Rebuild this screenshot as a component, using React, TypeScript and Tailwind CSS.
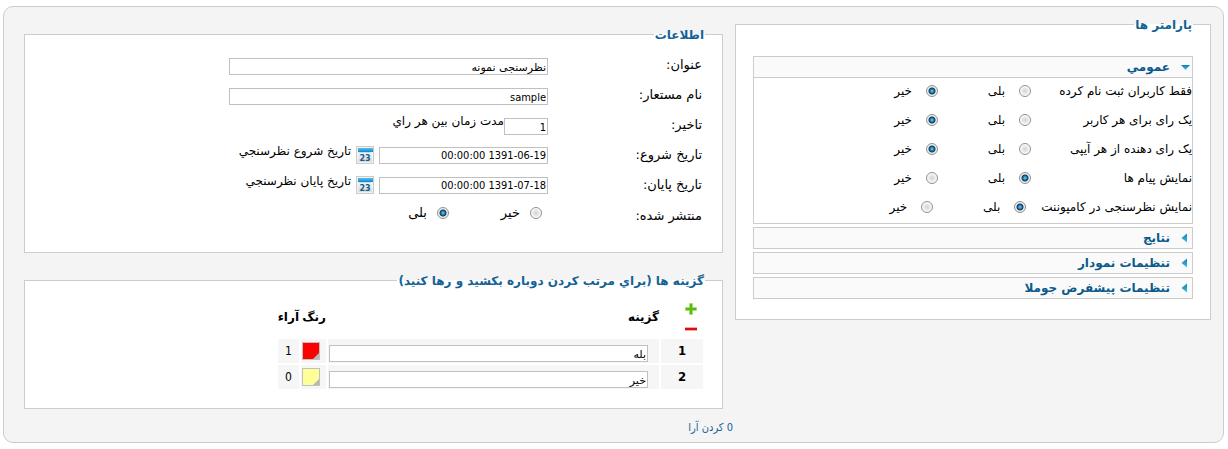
import React, { useState } from 'react';

interface YesNoOption {
    value: string;
    label: string;
}

interface Parameter {
    name: string;
    label: string;
    value: string;
}

interface PollOption {
    id: number;
    title: string;
    swatchClass: string;
    votes: number;
}

const yesNo: YesNoOption[] = [
    { value: '1', label: 'بلی' },
    { value: '0', label: 'خیر' },
];

const noYes: YesNoOption[] = [
    { value: '0', label: 'خیر' },
    { value: '1', label: 'بلی' },
];

const parameters: Parameter[] = [
    { name: 'only_registered', label: 'فقط کاربران ثبت نام کرده', value: '0' },
    { name: 'one_per_user', label: 'یک رای برای هر کاربر', value: '0' },
    { name: 'one_per_ip', label: 'یک رای دهنده از هر آیپی', value: '0' },
    { name: 'show_messages', label: 'نمایش پیام ها', value: '1' },
    { name: 'show_component', label: 'نمایش نظرسنجی در کامپوننت', value: '1' },
];

const pollOptions: PollOption[] = [
    { id: 1, title: 'بله', swatchClass: 'bg-[#ff0000]', votes: 1 },
    { id: 2, title: 'خیر', swatchClass: 'bg-[#ffff99]', votes: 0 },
];

const inputClass = 'h-[17px] border border-[#c0c0c0] bg-white px-px pt-px text-[11px] leading-[14px] text-black outline-none';
const condensed = "font-['DejaVu_Sans_Condensed','DejaVu_Sans',sans-serif]";

const CalendarIcon = () => (
    <svg width="18" height="18" viewBox="0 0 18 18" aria-hidden="true">
        <defs>
            <linearGradient id="cal-page" x1="0" y1="0" x2="0" y2="1">
                <stop offset="0" stopColor="#ffffff" />
                <stop offset="1" stopColor="#dcdcdc" />
            </linearGradient>
            <linearGradient id="cal-band" x1="0" y1="0" x2="0" y2="1">
                <stop offset="0" stopColor="#56c0ee" />
                <stop offset="1" stopColor="#1188cc" />
            </linearGradient>
        </defs>
        <rect x="0.5" y="0.5" width="17" height="17" fill="#f1f1f1" stroke="#cccccc" />
        <rect x="2" y="3" width="14" height="13" fill="url(#cal-page)" />
        <rect x="2" y="2" width="15" height="4" fill="url(#cal-band)" />
        <path d="M3 6.5h12" stroke="#c4dbe8" />
        <text x="9" y="15" textAnchor="middle" fontSize="8" fontWeight="bold" fontFamily="DejaVu Sans" fill="#0b5f92">23</text>
    </svg>
);

const PlusIcon = () => (
    <svg width="14" height="14" viewBox="0 0 14 14" aria-hidden="true">
        <path d="M5.500 1.500h3v4h4v3h-4v4h-3v-4h-4v-3h4z" fill="#5fc21c" stroke="#a5dc78" strokeWidth="1" />
        <path d="M7 2v10M2 7h10" stroke="#58bb12" strokeWidth="2" />
    </svg>
);

const MinusIcon = () => (
    <svg width="14" height="6" viewBox="0 0 14 6" aria-hidden="true">
        <rect x="1" y="1" width="12" height="4" fill="#f3a9a9" />
        <rect x="1" y="2" width="12" height="2" fill="#dd0d0d" />
    </svg>
);

const Arrow = ({ open }: { open: boolean }) => (
    <svg width="10" height="10" viewBox="0 0 10 10" aria-hidden="true">
        <defs>
            <linearGradient id="arrow-fill" x1="0" y1="0" x2="0" y2="1">
                <stop offset="0" stopColor="#0f7fae" />
                <stop offset="1" stopColor="#44bfe8" />
            </linearGradient>
        </defs>
        <path d={open ? 'M1 3h9L5.500 8z' : 'M7 0.500v9L1.500 5z'} fill="url(#arrow-fill)" />
    </svg>
);

interface RadioPairProps {
    name: string;
    options: YesNoOption[];
    defaultValue: string;
    gapClass: string;
}

const RadioPair: React.FC<RadioPairProps> = ({ name, options, defaultValue, gapClass }) => (
    <>
        {options.map(option => (
            <label key={option.value} className={`flex w-[93px] shrink-0 items-center ${gapClass}`}>
                <input
                    type="radio"
                    name={name}
                    value={option.value}
                    defaultChecked={option.value === defaultValue}
                    className="size-3 shrink-0 appearance-none rounded-full border border-[#8e8f8f] bg-[radial-gradient(circle,#d2d5d9_0,#e8e9ea_3px,#ffffff_5px)] checked:bg-[radial-gradient(circle,#6fd0f5_0,#1d74aa_2px,#12385a_3px,#f0f0f0_4px)]"
                />
                <span>{option.label}</span>
            </label>
        ))}
    </>
);

interface FieldRowProps {
    id?: string;
    label: string;
    children: React.ReactNode;
}

const FieldRow: React.FC<FieldRowProps> = ({ id, label, children }) => (
    <div className="flex min-h-[30px] items-center">
        {id ? <label htmlFor={id} className="w-[154px] shrink-0">{label}</label> : <span className="w-[154px] shrink-0 pt-0.5">{label}</span>}
        {children}
    </div>
);

interface PanelProps {
    title: string;
    className: string;
    children: React.ReactNode;
}

const Panel: React.FC<PanelProps> = ({ title, className, children }) => (
    <fieldset className={`min-w-0 border border-[#cccccc] bg-white ${className}`}>
        <legend className="h-4 px-px text-[12px] leading-[19px] font-bold text-[#146295]">{title}</legend>
        {children}
    </fieldset>
);

interface SectionProps {
    title: string;
    open: boolean;
    onToggle: () => void;
    children?: React.ReactNode;
}

const Section: React.FC<SectionProps> = ({ title, open, onToggle, children }) => (
    <div className="border border-[#cccccc]">
        <button
            type="button"
            aria-expanded={open}
            onClick={onToggle}
            className="flex h-5 w-full items-center gap-2.5 bg-[#fafafa] px-[2px] text-[12px] leading-5 font-bold text-[#0b5a8c]"
        >
            <Arrow open={open} />
            {title}
        </button>
        {open && children && <div className="border-t border-[#cccccc]">{children}</div>}
    </div>
);

const DateField = ({ id, value, hint }: { id: string; value: string; hint: string }) => (
    <>
        <input id={id} defaultValue={value} className={`w-[169px] ${condensed} ${inputClass}`} />
        <button type="button" aria-label={hint} className="mx-[5px]"><CalendarIcon /></button>
        <span className="pb-2 text-[12px]">{hint}</span>
    </>
);

const InfoPanel = () => (
    <Panel title="اطلاعات" className="mr-3 pr-[17px] pb-5 pl-4">
        <div className="pt-2 pr-[3px] text-[13px] leading-4">
            <FieldRow id="title" label="عنوان:">
                <input id="title" defaultValue="نظرسنجی نمونه" className={`mt-[3px] w-[319px] ${inputClass}`} />
            </FieldRow>
            <FieldRow id="alias" label="نام مستعار:">
                <input id="alias" defaultValue="sample" className={`mt-[3px] w-[319px] ${condensed} ${inputClass}`} />
            </FieldRow>
            <FieldRow id="lag" label="تاخیر:">
                <input id="lag" defaultValue="1" className={`mt-[3px] w-11 ${condensed} ${inputClass}`} />
                <span className="pb-2 text-[12px]">مدت زمان بین هر راي</span>
            </FieldRow>
            <FieldRow id="start" label="تاریخ شروع:">
                <DateField id="start" value="1391-06-19 00:00:00" hint="تاریخ شروع نظرسنجي" />
            </FieldRow>
            <FieldRow id="end" label="تاریخ پایان:">
                <DateField id="end" value="1391-07-18 00:00:00" hint="تاریخ پایان نظرسنجي" />
            </FieldRow>
            <div className="pb-0.5">
                <FieldRow label="منتشر شده:">
                    <div className="flex pr-1.5 pb-1">
                        <RadioPair name="published" options={noYes} defaultValue="1" gapClass="gap-2.5" />
                    </div>
                </FieldRow>
            </div>
        </div>
    </Panel>
);

const OptionsPanel = () => (
    <Panel title="گزینه ها (براي مرتب کردن دوباره بکشید و رها کنید)" className="mr-3 pr-[17px] pb-[17px] pl-4">
        <table className="mt-1.5 w-[429px] table-fixed border-separate border-spacing-[2px] text-[12px] leading-4">
            <thead>
                <tr className="h-[41px] text-right font-bold">
                    <th className="w-[42px]">
                        <div className="flex flex-col items-center gap-2.5 pl-[18px]">
                            <button type="button" aria-label="افزودن"><PlusIcon /></button>
                            <button type="button" aria-label="حذف"><MinusIcon /></button>
                        </div>
                    </th>
                    <th>گزینه</th>
                    <th className="w-[25px]">رنگ</th>
                    <th className="w-[21px]">آراء</th>
                </tr>
            </thead>
            <tbody>
                {pollOptions.map(option => (
                    <tr key={option.id} className={`h-6 ${condensed}`}>
                        <td className="bg-[#f6f6f6] text-center text-[13px] font-bold">{option.id}</td>
                        <td className="bg-[#f6f6f6] pt-[5px] pr-[11px] pl-px font-['DejaVu_Sans',sans-serif]">
                            <input aria-label={`گزینه ${option.id}`} defaultValue={option.title} className={`block w-full ${inputClass}`} />
                        </td>
                        <td className="bg-[#f6f6f6] pr-1.5 pl-px">
                            <button type="button" aria-label="رنگ" className={`flex size-[18px] items-end justify-start border border-[#c0c0c0] ${option.swatchClass}`}>
                                <svg width="6" height="6" viewBox="0 0 6 6" aria-hidden="true"><path d="M6 0v6H0z" fill="#b8b8b8" /></svg>
                            </button>
                        </td>
                        <td className="bg-[#f6f6f6] text-center">{option.votes}</td>
                    </tr>
                ))}
            </tbody>
        </table>
    </Panel>
);

const ParametersPanel = () => {
    const [openSection, setOpenSection] = useState<string | null>('general');
    const toggle = (key: string) => setOpenSection(openSection === key ? null : key);

    return (
        <Panel title="پارامتر ها" className="px-[17px] pb-5">
            <div className="mt-6 flex flex-col gap-[3px]">
                <Section title="عمومي" open={openSection === 'general'} onToggle={() => toggle('general')}>
                    {parameters.map(param => (
                        <div key={param.name} className="flex h-[29px] items-start text-[12px] leading-[26px]">
                            <span className="min-w-[161px] pl-[15px] whitespace-nowrap">{param.label}</span>
                            <RadioPair name={param.name} options={yesNo} defaultValue={param.value} gapClass="gap-3.5" />
                        </div>
                    ))}
                </Section>
                <Section title="نتایج" open={openSection === 'results'} onToggle={() => toggle('results')} />
                <Section title="تنظیمات نمودار" open={openSection === 'chart'} onToggle={() => toggle('chart')} />
                <Section title="تنظیمات پیشفرض جوملا" open={openSection === 'joomla'} onToggle={() => toggle('joomla')} />
            </div>
        </Panel>
    );
};

const App = () => (
    <div dir="rtl" className="bg-white pt-1.5 pr-1 pb-1.5 pl-[3px] font-['DejaVu_Sans',sans-serif] text-black">
        <form className="grid grid-cols-[476fr_711fr] items-start rounded-[10px] border border-[#cccccc] bg-[#f4f4f4] pt-[9px] pr-3 pb-1.5 pl-5">
            <ParametersPanel />
            <div className="flex flex-col pt-2.5">
                <InfoPanel />
                <div className="mt-[19px]">
                    <OptionsPanel />
                </div>
                <a href="#reset" className={`mt-[11px] mr-0.5 w-fit text-[11px] leading-4 text-[#146295] ${condensed}`}>0 کردن آرا</a>
            </div>
        </form>
    </div>
);

export default App;
